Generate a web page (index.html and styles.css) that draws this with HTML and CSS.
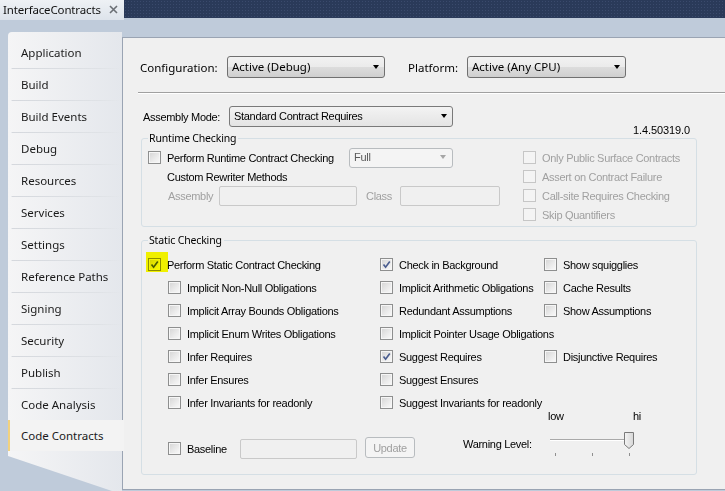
FILE: index.html
```html
<!DOCTYPE html>
<html lang="en">
<head>
<meta charset="utf-8">
<title>InterfaceContracts</title>
<link rel="stylesheet" href="styles.css">
</head>
<body>
<div class="doc-tabs">
  <div class="doc-tab">
    <span class="doc-title">InterfaceContracts</span>
    <svg class="close" width="9" height="9" viewBox="0 0 9 9"><path d="M1 1L8 8M8 1L1 8" stroke="#6b6f75" stroke-width="1.6" fill="none"/></svg>
  </div>
  <div class="doc-fill"></div>
</div>
<div class="workspace">
  <nav class="side">
    <div class="nav-item">Application</div>
    <div class="nav-item">Build</div>
    <div class="nav-item">Build Events</div>
    <div class="nav-item">Debug</div>
    <div class="nav-item">Resources</div>
    <div class="nav-item">Services</div>
    <div class="nav-item">Settings</div>
    <div class="nav-item">Reference Paths</div>
    <div class="nav-item">Signing</div>
    <div class="nav-item">Security</div>
    <div class="nav-item">Publish</div>
    <div class="nav-item">Code Analysis</div>
    <div class="nav-item selected">Code Contracts</div>
    <div class="side-tail"></div>
  </nav>
  <main class="panel">
    <div class="config-row">
      <span class="ui-label cfg-label">Configuration:</span>
      <div class="combo combo-cfg"><span class="combo-text">Active (Debug)</span><i class="arrow"></i></div>
      <span class="ui-label plat-label">Platform:</span>
      <div class="combo combo-plat"><span class="combo-text">Active (Any CPU)</span><i class="arrow"></i></div>
    </div>
    <div class="rule"></div>
    <div class="asm-row">
      <span class="asm-label">Assembly Mode:</span>
      <div class="combo combo-asm"><span class="combo-text">Standard Contract Requires</span><i class="arrow"></i></div>
    </div>
    <div class="checking">
      <div class="version">1.4.50319.0</div>
      <fieldset class="group runtime">
        <legend>Runtime Checking</legend>
        <div class="runtime-body">
          <div class="rt-left">
            <div class="rt-row">
              <label class="cb rt-main"><i class="box"></i><span>Perform Runtime Contract Checking</span></label>
              <div class="combo combo-full disabled"><span class="combo-text">Full</span><i class="arrow"></i></div>
            </div>
            <div class="rt-row rt-sub">Custom Rewriter Methods</div>
            <div class="rt-row rt-fields">
              <span class="dim lbl-asm">Assembly</span>
              <span class="field f-asm"></span>
              <span class="dim lbl-class">Class</span>
              <span class="field f-class"></span>
            </div>
          </div>
          <div class="rt-right">
            <label class="cb dis"><i class="box"></i><span>Only Public Surface Contracts</span></label>
            <label class="cb dis"><i class="box"></i><span>Assert on Contract Failure</span></label>
            <label class="cb dis"><i class="box"></i><span>Call-site Requires Checking</span></label>
            <label class="cb dis"><i class="box"></i><span>Skip Quantifiers</span></label>
          </div>
        </div>
      </fieldset>
      <fieldset class="group static">
        <legend>Static Checking</legend>
        <div class="static-grid">
          <label class="cb"><i class="hl"><i class="box on"><svg viewBox="0 0 11 11"><path d="M2.5 5.5L4.6 8.2L8.8 2.6" /></svg></i></i><span>Perform Static Contract Checking</span></label>
          <label class="cb"><i class="box on"><svg viewBox="0 0 11 11"><path d="M2.5 5.5L4.6 8.2L8.8 2.6" /></svg></i><span>Check in Background</span></label>
          <label class="cb"><i class="box"></i><span>Show squigglies</span></label>

          <label class="cb sub"><i class="box"></i><span>Implicit Non-Null Obligations</span></label>
          <label class="cb"><i class="box"></i><span>Implicit Arithmetic Obligations</span></label>
          <label class="cb"><i class="box"></i><span>Cache Results</span></label>

          <label class="cb sub"><i class="box"></i><span>Implicit Array Bounds Obligations</span></label>
          <label class="cb"><i class="box"></i><span>Redundant Assumptions</span></label>
          <label class="cb"><i class="box"></i><span>Show Assumptions</span></label>

          <label class="cb sub"><i class="box"></i><span>Implicit Enum Writes Obligations</span></label>
          <label class="cb wide"><i class="box"></i><span>Implicit Pointer Usage Obligations</span></label>
          <span></span>

          <label class="cb sub"><i class="box"></i><span>Infer Requires</span></label>
          <label class="cb"><i class="box on"><svg viewBox="0 0 11 11"><path d="M2.5 5.5L4.6 8.2L8.8 2.6" /></svg></i><span>Suggest Requires</span></label>
          <label class="cb"><i class="box"></i><span>Disjunctive Requires</span></label>

          <label class="cb sub"><i class="box"></i><span>Infer Ensures</span></label>
          <label class="cb"><i class="box"></i><span>Suggest Ensures</span></label>
          <span></span>

          <label class="cb sub"><i class="box"></i><span>Infer Invariants for readonly</span></label>
          <label class="cb wide"><i class="box"></i><span>Suggest Invariants for readonly</span></label>
          <span></span>
        </div>
        <div class="static-bottom">
          <div class="baseline">
            <label class="cb"><i class="box"></i><span>Baseline</span></label>
            <span class="field f-base"></span>
            <span class="btn disabled">Update</span>
          </div>
          <div class="warn">
            <div class="warn-scale"><span>low</span><span>hi</span></div>
            <div class="warn-row">
              <span class="warn-label">Warning Level:</span>
              <div class="slider">
                <svg width="92" height="26" viewBox="0 0 92 26">
                  <rect x="2" y="8" width="84" height="1" fill="#a9a9a9"/>
                  <rect x="2" y="9" width="84" height="1" fill="#ffffff"/>
                  <rect x="7" y="22" width="1" height="3" fill="#8f8f8f"/>
                  <rect x="44" y="22" width="1" height="3" fill="#8f8f8f"/>
                  <rect x="81" y="22" width="1" height="3" fill="#8f8f8f"/>
                  <defs><linearGradient id="th" x1="0" x2="1"><stop offset="0" stop-color="#f4f4f4"/><stop offset="1" stop-color="#d6d6d6"/></linearGradient></defs>
                  <path d="M76.5 1.5H85.5V13.5L81 17.5L76.5 13.5Z" fill="url(#th)" stroke="#7a7a7a"/>
                </svg>
              </div>
            </div>
          </div>
        </div>
      </fieldset>
    </div>
  </main>
</div>
</body>
</html>
```
FILE: styles.css
```css
* { box-sizing: border-box; }
html, body { margin: 0; padding: 0; }
body {
  width: 725px;
  height: 491px;
  overflow: hidden;
  background: #bfcbda;
  font-family: "Liberation Sans", Arial, sans-serif;
  font-size: 11px;
  letter-spacing: -0.3px;
  color: #000;
}

/* document tab strip */
.doc-tabs { display: flex; height: 20px; letter-spacing: 0; }
.doc-tab {
  width: 124px;
  display: flex;
  align-items: center;
  justify-content: space-between;
  padding: 0 6px 2px 3px;
  background: linear-gradient(#eef1f5, #dde3eb);
  font-family: "Noto Sans", "Open Sans", sans-serif;
  font-size: 11.5px;
  color: #111;
}
.doc-title { letter-spacing: -0.15px; }
.close { display: block; margin-top: 1px; }
.doc-fill {
  flex: 1;
  height: 18px;
  background-color: #2a3a59;
  background-image: radial-gradient(circle, #3a4a6c 0.7px, transparent 0.9px);
  background-size: 3px 3px;
}

/* workspace */
.workspace {
  display: flex;
  padding: 12px 0 0 8px;
  height: 471px;
}

/* left navigation */
.side {
  width: 114px;
  flex: none;
  display: flex;
  flex-direction: column;
  padding-top: 5px;
  background: linear-gradient(90deg, #f5f5f6, #e4e7ec);
  border-radius: 4px 0 0 0;
  font-family: "Noto Sans", "Open Sans", sans-serif;
  font-size: 11.5px;
  letter-spacing: 0;
  color: #1a1a1a;
}
.nav-item {
  height: 32px;
  flex: none;
  display: flex;
  align-items: center;
  padding: 0 0 1px 13px;
  border-bottom: 1px solid transparent;
  border-image: linear-gradient(90deg, transparent 4px, #d5d8dd 5px, #dfe2e6 80%, transparent 100%) 1;
}
.nav-item.selected {
  position: relative;
  z-index: 2;
  width: 116px;
  height: 31px;
  margin-top: -1px;
  border: none;
  border-left: 2px solid #f2d27e;
  padding-left: 11px;
  background: #f3f3f3;
}
.side-tail {
  flex: 1;
  background: #bfcbda;
  clip-path: polygon(0 5px, 0 100%, 104px 100%);
}

/* main property panel */
.panel {
  flex: 1;
  margin-top: 5px;
  height: 453px;
  background: #f0f0f0;
  border: 1px solid #9aa4b3;
  border-right: none;
  padding-left: 17px;
}

.config-row {
  display: flex;
  align-items: center;
  height: 22px;
  margin-top: 18px;
  letter-spacing: 0;
}
.ui-label {
  font-family: "Noto Sans", "Open Sans", sans-serif;
  font-size: 11.5px;
}
.cfg-label { width: 87px; }
.plat-label { width: 59px; margin-left: 23px; }

.combo {
  display: flex;
  align-items: center;
  height: 22px;
  border: 1px solid #707070;
  border-radius: 3px;
  background: linear-gradient(#f2f2f2 0%, #ebebeb 50%, #dddddd 50%, #cfcfcf 100%);
  padding: 0 0 1px 4px;
  font-family: "Noto Sans", "Open Sans", sans-serif;
  font-size: 11.5px;
}
.combo-text { flex: 1; }
.arrow {
  width: 0;
  height: 0;
  border-left: 3.5px solid transparent;
  border-right: 3.5px solid transparent;
  border-top: 4px solid #000;
  margin-right: 5px;
}
.combo-cfg { width: 158px; }
.combo-plat { width: 159px; }

.rule {
  height: 1px;
  background: #a0a0a0;
  margin: 14px 0 0 -2px;
  box-shadow: 0 1px 0 #ffffff;
}

.asm-row {
  display: flex;
  align-items: center;
  margin-top: 13px;
  height: 21px;
}
.asm-label { width: 86px; margin-left: 3px; }
.combo-asm {
  width: 224px;
  height: 21px;
  font-family: "Liberation Sans", Arial, sans-serif;
  font-size: 11px;
  background: linear-gradient(#f3f3f3, #e4e4e4);
  border-color: #7a7a7a;
  padding-left: 4px;
}

.checking { width: 556px; margin-left: 1px; }
.version {
  height: 12px;
  line-height: 12px;
  margin-top: -3px;
  text-align: right;
  padding-right: 7px;
  letter-spacing: -0.1px;
}

.group {
  margin: 0;
  padding: 0 0 0 6px;
  border: 1px solid #d5dfe5;
  border-radius: 3px;
  min-width: 0;
}
.group legend {
  font-family: "Noto Sans", "Open Sans", sans-serif;
  font-size: 10.5px;
  letter-spacing: -0.15px;
  line-height: 14px;
  padding: 0 2px 0 1px;
  margin-left: 0;
}
.runtime { margin-top: -5px; padding-top: 3px; padding-bottom: 2px; }

.runtime-body { display: flex; }
.rt-left { width: 375px; flex: none; }
.rt-row { display: flex; align-items: center; height: 19px; }
.rt-main { width: 201px; }
.rt-sub { padding-left: 19px; }
.rt-fields { height: 20px; padding-left: 20px; }
.lbl-asm { width: 51px; }
.lbl-class { width: 34px; margin-left: 9px; }
.field {
  display: block;
  height: 20px;
  border: 1px solid #c9c9c9;
  border-radius: 2px;
  background: #f0f0f0;
}
.f-asm { width: 138px; }
.f-class { width: 100px; }
.combo-full {
  width: 104px;
  height: 20px;
  font-family: "Liberation Sans", Arial, sans-serif;
  font-size: 11px;
}
.combo.disabled {
  border-color: #b8bcbf;
  background: #f4f4f4;
  color: #5a5a5a;
}
.combo.disabled .arrow { border-top-color: #a6a6a6; margin-right: 6px; }

.rt-right { display: flex; flex-direction: column; }
.rt-right .cb { height: 19px; }

.dim { color: #a0a0a0; }

/* checkboxes */
.cb {
  display: flex;
  align-items: center;
  gap: 6px;
  white-space: nowrap;
}
.box {
  display: block;
  flex: none;
  width: 13px;
  height: 13px;
  border: 1px solid #8e8f8f;
  background: linear-gradient(135deg, #d4d4d4 0%, #ececec 60%, #fafafa 100%);
  box-shadow: inset 0 0 0 1px #f6f6f6;
}
.box svg {
  display: block;
  width: 11px;
  height: 11px;
}
.box svg path {
  fill: none;
  stroke: #4a5d8f;
  stroke-width: 1.7;
}
.cb.dis { color: #a0a0a0; }
.cb.dis .box { border-color: #c6c6c6; background: #f4f4f4; box-shadow: none; }

/* yellow highlighter mark over the first checkbox */
.hl { display: block; position: relative; }
.hl::after {
  content: "";
  position: absolute;
  left: -2px;
  top: -6px;
  width: 22px;
  height: 20px;
  background: #ffff00;
  mix-blend-mode: multiply;
}

.static { margin-top: 6px; padding-top: 6px; padding-bottom: 17px; }
.static-grid {
  display: grid;
  grid-template-columns: 232px 164px 1fr;
  grid-auto-rows: 23px;
}
.static-grid .cb { height: 23px; }
.static-grid .sub { padding-left: 20px; }
.static-grid .wide { margin-right: -40px; }

.static-bottom {
  display: flex;
  margin-top: -4px;
}
.baseline {
  width: 315px;
  padding-left: 20px;
  display: flex;
  align-items: center;
  align-self: flex-end;
  height: 21px;
  margin-bottom: -2px;
}
.baseline .cb { width: 72px; }
.f-base { width: 117px; height: 20px; }
.btn {
  margin-left: 8px;
  width: 50px;
  height: 21px;
  display: flex;
  align-items: center;
  justify-content: center;
  border: 1px solid #b8bcbf;
  border-radius: 3px;
  background: #f4f4f4;
  color: #a0a0a0;
  margin-top: -2px;
}

.warn { display: flex; flex-direction: column; }
.warn-scale {
  display: flex;
  height: 13px;
  padding-left: 85px;
}
.warn-scale span:first-child { width: 85px; }
.warn-row {
  display: flex;
  align-items: center;
  margin-top: 8px;
  height: 26px;
}
.warn-label { width: 85px; }
.slider svg { display: block; }
```
